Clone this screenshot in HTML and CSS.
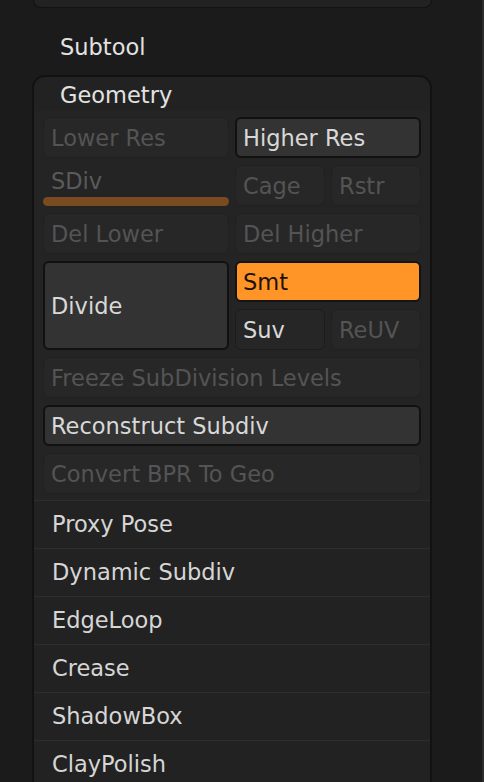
FILE: index.html
```html
<!DOCTYPE html>
<html>
<head>
<meta charset="utf-8">
<link rel="stylesheet" href="styles.css">
</head>
<body>
<div class="screen">
  <div class="topbar"></div>
  <div class="subtool">Subtool</div>
  <div class="panel">
    <div class="panel-header">Geometry</div>
    <div class="grid">
      <div class="btn off c1">Lower Res</div>
      <div class="btn on c23">Higher Res</div>
      <div class="sdiv c1"><span class="sdiv-label">SDiv</span><span class="sdiv-bar"></span></div>
      <div class="btn off">Cage</div>
      <div class="btn off">Rstr</div>
      <div class="btn off c1">Del Lower</div>
      <div class="btn off c23">Del Higher</div>
      <div class="btn on divide">Divide</div>
      <div class="btn orange c23">Smt</div>
      <div class="btn dark">Suv</div>
      <div class="btn off">ReUV</div>
      <div class="btn off full">Freeze SubDivision Levels</div>
      <div class="btn on full">Reconstruct Subdiv</div>
      <div class="btn off full">Convert BPR To Geo</div>
    </div>
    <div class="list">
      <div class="item">Proxy Pose</div>
      <div class="item">Dynamic Subdiv</div>
      <div class="item">EdgeLoop</div>
      <div class="item">Crease</div>
      <div class="item">ShadowBox</div>
      <div class="item">ClayPolish</div>
    </div>
  </div>
  <div class="edge"></div>
</div>
</body>
</html>
```

FILE: styles.css
```css
html, body {
  margin: 0;
  padding: 0;
  background: #1b1b1b;
}
.screen {
  position: relative;
  width: 484px;
  height: 782px;
  overflow: hidden;
  font-family: "DejaVu Sans", "Noto Sans", sans-serif;
  font-size: 22.5px;
  color: #d6d6d6;
}
.edge {
  position: absolute;
  right: 0;
  top: 0;
  width: 2px;
  height: 782px;
  background: #2c2c2c;
}
.topbar {
  margin-left: 33px;
  width: 397px;
  height: 7px;
  background: #222222;
  border: 1px solid #121212;
  border-top: none;
  border-radius: 0 0 11px 11px;
}
.subtool {
  height: 30px;
  margin-top: 24px;
  padding-left: 60px;
  line-height: 30px;
  color: #e2e2e2;
}
.panel {
  margin-top: 13px;
  margin-left: 32px;
  width: 396px;
  border: 2px solid #121212;
  border-bottom: none;
  border-radius: 13px 13px 0 0;
  background: #222222;
}
.panel-header {
  height: 34px;
  padding-left: 26px;
  line-height: 36px;
  color: #e2e2e2;
}
.grid {
  display: grid;
  grid-template-columns: 186px 90px 90px;
  grid-auto-rows: 41px;
  column-gap: 6px;
  row-gap: 7px;
  padding: 6px 9px 6px 9px;
  background: #242424;
}
.c1 { grid-column: 1; }
.c23 { grid-column: 2 / 4; }
.full { grid-column: 1 / 4; }
.divide { grid-column: 1; grid-row: span 2; }
.btn {
  box-sizing: border-box;
  display: flex;
  align-items: center;
  padding-left: 7px;
  border-radius: 6px;
  white-space: nowrap;
}
.off {
  background: #272727;
  border: 1px solid #202020;
  color: #545454;
}
.on {
  background: #333333;
  border: 2px solid #111111;
  color: #d8d8d8;
  padding-left: 6px;
}
.dark {
  background: #262626;
  border: 1px solid #1c1c1c;
  color: #d8d8d8;
}
.orange {
  background: #ff9526;
  border: 2px solid #141414;
  color: #1c1209;
  padding-left: 6px;
}
.sdiv {
  display: flex;
  flex-direction: column;
  justify-content: space-between;
}
.sdiv-label {
  padding-left: 8px;
  color: #5a5a5a;
  line-height: 32px;
}
.sdiv-bar {
  height: 11px;
  border-radius: 6px;
  background: #7a4b21;
}
.list {
  background: #222222;
}
.item {
  height: 47px;
  border-top: 1px solid #2e2e2e;
  padding-left: 18px;
  line-height: 46px;
  color: #d6d6d6;
}
```
